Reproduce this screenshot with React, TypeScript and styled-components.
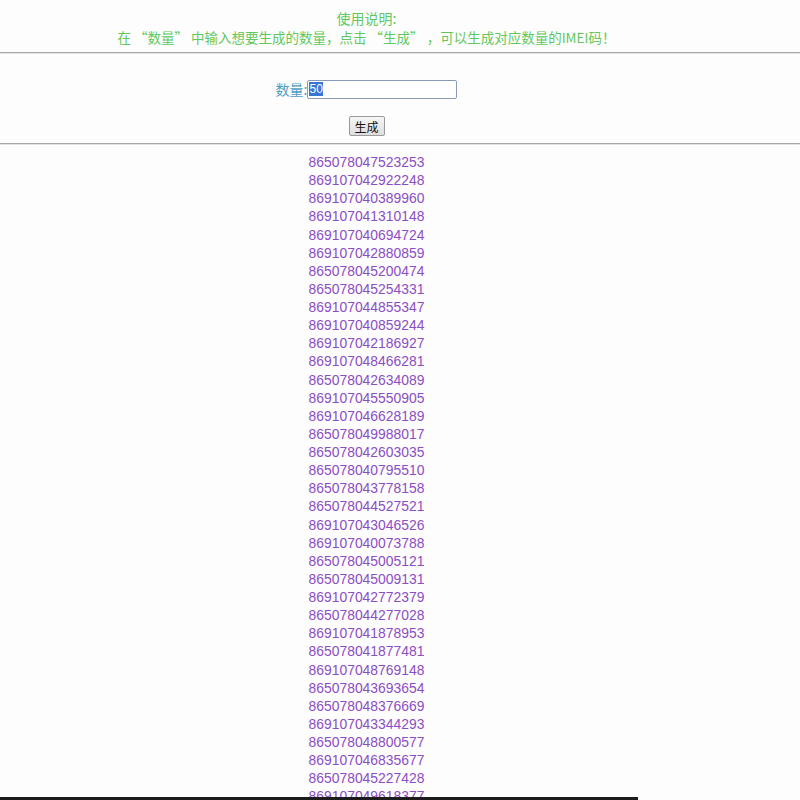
import React, { useState, useEffect, useRef } from 'react';
import styled, { createGlobalStyle } from 'styled-components';

const GlobalStyle = createGlobalStyle`
    html, body {
        margin:0;
        padding:0;
        background:#fdfdfd;
        font-family:"Noto Sans CJK SC", "Liberation Sans", sans-serif;
        overflow:hidden;
    }
`;

const Page = styled.div`
    display:flex;
    flex-direction:column;
    align-items:stretch;
    height:800px;
    overflow:hidden;
`;

// the content column is centred on a narrower area than the page
const Column = styled.div`
    width:733px;
    display:flex;
    flex-direction:column;
    align-items:center;
`;

const Guide = styled(Column)`
    text-align:center;
    color:#62c85e;
    font-size:14px;
    line-height:19px;
    padding-top:9px;
    padding-bottom:5px;
`;

const GuideLine = styled.div<{ $size: number }>`
    font-size:${(p) => p.$size}px;
`;

const Rule = styled.hr<{ $gap: number }>`
    width:100%;
    margin:0 0 ${(p) => p.$gap}px 0;
    border:none;
    border-top:1px solid #a8a8a8;
    border-bottom:1px solid #e4e4e4;
    height:0;
`;

const Form = styled.form`
    width:733px;
    display:flex;
    flex-direction:column;
    align-items:center;
    gap:17px;
    padding-bottom:7px;
`;

const Field = styled.label`
    display:flex;
    align-items:center;
    color:#4b9ec6;
    font-size:14px;
    margin-top:-1px;
`;

const Input = styled.input`
    width:150px;
    height:19px;
    box-sizing:border-box;
    border:1px solid #8a9bb8;
    border-radius:2px;
    padding:0 1px;
    font-size:12px;
    font-family:"Liberation Sans", sans-serif;
    color:#222;
    background:#fff;
    outline:none;
    &::selection{
        background:#3875d7;
        color:#fff;
    }
`;

const Button = styled.button`
    width:36px;
    height:20px;
    padding:0;
    font-size:12px;
    font-family:"Noto Sans CJK SC", sans-serif;
    color:#111;
    border:1px solid #9a9a9a;
    border-radius:2px;
    background:linear-gradient(#f6f6f6, #dedede);
    cursor:pointer;
`;

const List = styled(Column)`
    padding-top:0;
`;

const Code = styled.div`
    color:#8c4ec4;
    font-size:13.9px;
    line-height:18.12px;
    font-family:"Liberation Sans", sans-serif;
`;

const TaskEdge = styled.div`
    position:fixed;
    left:0;
    bottom:0;
    width:638px;
    height:3px;
    background:#1c1c1c;
`;

const codes = [
    '865078047523253', '869107042922248', '869107040389960', '869107041310148',
    '869107040694724', '869107042880859', '865078045200474', '865078045254331',
    '869107044855347', '869107040859244', '869107042186927', '869107048466281',
    '865078042634089', '869107045550905', '869107046628189', '865078049988017',
    '865078042603035', '865078040795510', '865078043778158', '865078044527521',
    '869107043046526', '869107040073788', '865078045005121', '865078045009131',
    '869107042772379', '865078044277028', '869107041878953', '865078041877481',
    '869107048769148', '865078043693654', '865078048376669', '869107043344293',
    '865078048800577', '869107046835677', '865078045227428', '869107049618377',
];

function App() {
    const [count, setCount] = useState('50');
    const inputRef = useRef<HTMLInputElement>(null);

    useEffect(() => {
        inputRef.current?.focus();
        inputRef.current?.select();
    }, []);

    const onChangeCount = (e: any) => {
        setCount(e.target.value);
    }

    const onSubmit = (e: any) => {
        e.preventDefault();
    }

    return (
        <Page>
            <GlobalStyle />
            <Guide>
                <GuideLine $size={14}>使用说明:</GuideLine>
                <GuideLine $size={13.5}>在 “数量” 中输入想要生成的数量，点击 “生成” ，可以生成对应数量的IMEI码！</GuideLine>
            </Guide>
            <Rule $gap={26} />
            <Form onSubmit={onSubmit}>
                <Field>
                    数量:<Input ref={inputRef} value={count} onChange={onChangeCount} />
                </Field>
                <Button type="submit">生成</Button>
            </Form>
            <Rule $gap={8} />
            <List>
                {codes.map((c) => (
                    <Code key={c}>{c}</Code>
                ))}
            </List>
            <TaskEdge />
        </Page>
    );
}

export default App;
